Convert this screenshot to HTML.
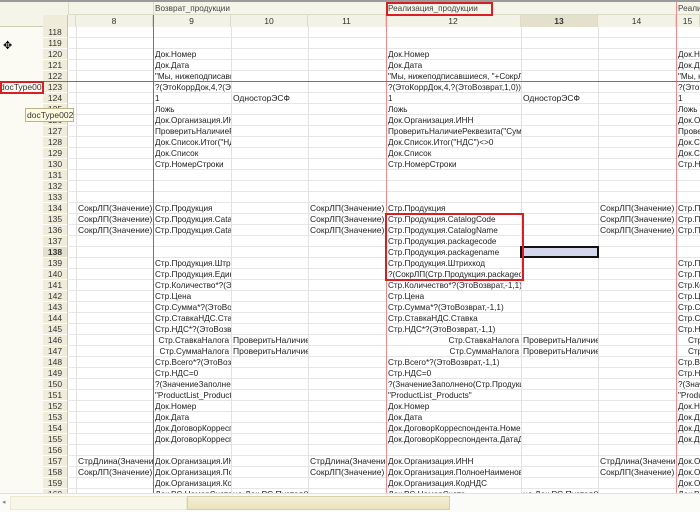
<!DOCTYPE html>
<html><head><meta charset="utf-8">
<style>
*{margin:0;padding:0;box-sizing:border-box}
body{width:700px;height:512px;overflow:hidden;background:#fff;position:relative;font-family:"Liberation Sans","DejaVu Sans",sans-serif;font-size:8.2px;color:#222}
.a{position:absolute}
.c{position:absolute;height:11px;line-height:11px;white-space:nowrap;overflow:hidden;font-size:8.2px;padding-left:2px}
.rn{position:absolute;left:43px;width:25px;height:11px;line-height:11px;text-align:center;font-size:8.5px;background:#efedda;border-bottom:1px solid #fff;border-right:1px solid #c9c6a8;color:#333}
.hd{position:absolute;top:15px;height:12px;line-height:12px;text-align:center;font-size:8.5px;background:#f3f2e6;border-right:1px solid #dcdac8;color:#333}
</style></head><body>
<div class="a" style="left:0;top:0;width:700px;height:2px;background:#9a9a9a"></div>
<div class="a" style="left:0;top:2px;width:700px;height:25px;background:#f5f4e9"></div>
<div class="a" style="left:68px;top:14px;width:632px;height:1px;background:#dcdac8"></div>
<div class="a" style="left:0;top:26px;width:700px;height:1px;background:#cfcdb6"></div>
<div class="a" style="left:0;top:27px;width:43px;height:466px;background:#fbfaf3"></div>
<div class="a" style="left:43px;top:15px;width:25px;height:12px;background:#efedda;border-right:1px solid #c9c6a8"></div>
<div class="a" style="left:68px;top:2px;width:1px;height:25px;background:#dcdac8"></div>
<div class="a" style="left:153px;top:2px;width:1px;height:13px;background:#dcdac8"></div>
<div class="c" style="left:153px;top:3px;width:150px;color:#444">Возврат_продукции</div>
<div class="c" style="left:386px;top:3px;width:150px;color:#444">Реализация_продукции</div>
<div class="c" style="left:676px;top:3px;width:30px;color:#444">Реали</div>
<div class="hd" style="left:68px;width:8px"></div>
<div class="hd" style="left:76px;width:77px">8</div>
<div class="hd" style="left:153px;width:78px">9</div>
<div class="hd" style="left:231px;width:77px">10</div>
<div class="hd" style="left:308px;width:78px">11</div>
<div class="hd" style="left:386px;width:135px">12</div>
<div class="hd" style="left:521px;width:77px;background:#e3e1cc;font-weight:bold">13</div>
<div class="hd" style="left:598px;width:78px">14</div>
<div class="hd" style="left:676px;width:24px">15</div>

<div class="a" style="left:68px;top:27px;width:632px;height:466px;background:
repeating-linear-gradient(to bottom,transparent 0,transparent 10px,#e6e6e6 10px,#e6e6e6 11px)"></div>
<div class="a" style="left:76px;top:27px;width:1px;height:466px;background:#e2e2e2"></div>
<div class="a" style="left:231px;top:27px;width:1px;height:466px;background:#e2e2e2"></div>
<div class="a" style="left:308px;top:27px;width:1px;height:466px;background:#e2e2e2"></div>
<div class="a" style="left:521px;top:27px;width:1px;height:466px;background:#e2e2e2"></div>
<div class="a" style="left:598px;top:27px;width:1px;height:466px;background:#e2e2e2"></div>

<div class="rn" style="top:27px">118</div><div class="rn" style="top:38px">119</div><div class="rn" style="top:49px">120</div><div class="rn" style="top:60px">121</div><div class="rn" style="top:71px">122</div><div class="rn" style="top:82px">123</div><div class="rn" style="top:93px">124</div><div class="rn" style="top:104px">125</div><div class="rn" style="top:115px">126</div><div class="rn" style="top:126px">127</div><div class="rn" style="top:137px">128</div><div class="rn" style="top:148px">129</div><div class="rn" style="top:159px">130</div><div class="rn" style="top:170px">131</div><div class="rn" style="top:181px">132</div><div class="rn" style="top:192px">133</div><div class="rn" style="top:203px">134</div><div class="rn" style="top:214px">135</div><div class="rn" style="top:225px">136</div><div class="rn" style="top:236px">137</div><div class="rn" style="top:247px;font-weight:bold;background:#e3e1cc">138</div><div class="rn" style="top:258px">139</div><div class="rn" style="top:269px">140</div><div class="rn" style="top:280px">141</div><div class="rn" style="top:291px">142</div><div class="rn" style="top:302px">143</div><div class="rn" style="top:313px">144</div><div class="rn" style="top:324px">145</div><div class="rn" style="top:335px">146</div><div class="rn" style="top:346px">147</div><div class="rn" style="top:357px">148</div><div class="rn" style="top:368px">149</div><div class="rn" style="top:379px">150</div><div class="rn" style="top:390px">151</div><div class="rn" style="top:401px">152</div><div class="rn" style="top:412px">153</div><div class="rn" style="top:423px">154</div><div class="rn" style="top:434px">155</div><div class="rn" style="top:445px">156</div><div class="rn" style="top:456px">157</div><div class="rn" style="top:467px">158</div><div class="rn" style="top:478px">159</div><div class="rn" style="top:489px">160</div>

<div class="c" style="left:153px;top:49px;width:78px">Док.Номер</div><div class="c" style="left:386px;top:49px;width:135px">Док.Номер</div><div class="c" style="left:676px;top:49px;width:24px">Док.Номер</div>
<div class="c" style="left:153px;top:60px;width:78px">Док.Дата</div><div class="c" style="left:386px;top:60px;width:135px">Док.Дата</div><div class="c" style="left:676px;top:60px;width:24px">Док.Дата</div>
<div class="c" style="left:153px;top:71px;width:78px">"Мы, нижеподписавшиеся</div><div class="c" style="left:386px;top:71px;width:135px">"Мы, нижеподписавшиеся, "+СокрЛП</div><div class="c" style="left:676px;top:71px;width:24px">"Мы, н</div>
<div class="c" style="left:153px;top:82px;width:78px">?(ЭтоКоррДок,4,?(ЭтоВозврат</div><div class="c" style="left:386px;top:82px;width:135px">?(ЭтоКоррДок,4,?(ЭтоВозврат,1,0))</div><div class="c" style="left:676px;top:82px;width:24px">?(ЭтоК</div>
<div class="c" style="left:153px;top:93px;width:78px">1</div><div class="c" style="left:231px;top:93px;width:77px;font-size:8.5px">ОдносторЭСФ</div><div class="c" style="left:386px;top:93px;width:135px">1</div><div class="c" style="left:521px;top:93px;width:77px;font-size:8.5px">ОдносторЭСФ</div><div class="c" style="left:676px;top:93px;width:24px">1</div>
<div class="c" style="left:153px;top:104px;width:78px">Ложь</div><div class="c" style="left:386px;top:104px;width:135px">Ложь</div><div class="c" style="left:676px;top:104px;width:24px">Ложь</div>
<div class="c" style="left:153px;top:115px;width:78px">Док.Организация.ИНН</div><div class="c" style="left:386px;top:115px;width:135px">Док.Организация.ИНН</div><div class="c" style="left:676px;top:115px;width:24px">Док.Орг</div>
<div class="c" style="left:153px;top:126px;width:78px">ПроверитьНаличиеРеквезита</div><div class="c" style="left:386px;top:126px;width:135px">ПроверитьНаличиеРеквезита("Сумма</div><div class="c" style="left:676px;top:126px;width:24px">Провер</div>
<div class="c" style="left:153px;top:137px;width:78px">Док.Список.Итог("НДС")</div><div class="c" style="left:386px;top:137px;width:135px">Док.Список.Итог("НДС")&lt;&gt;0</div><div class="c" style="left:676px;top:137px;width:24px">Док.Сп</div>
<div class="c" style="left:153px;top:148px;width:78px">Док.Список</div><div class="c" style="left:386px;top:148px;width:135px">Док.Список</div><div class="c" style="left:676px;top:148px;width:24px">Док.Сп</div>
<div class="c" style="left:153px;top:159px;width:78px">Стр.НомерСтроки</div><div class="c" style="left:386px;top:159px;width:135px">Стр.НомерСтроки</div><div class="c" style="left:676px;top:159px;width:24px">Стр.Но</div>

<div class="c" style="left:76px;top:203px;width:77px;font-size:8.5px">СокрЛП(Значение) =</div><div class="c" style="left:153px;top:203px;width:78px">Стр.Продукция</div><div class="c" style="left:308px;top:203px;width:78px;font-size:8.5px">СокрЛП(Значение) =</div><div class="c" style="left:386px;top:203px;width:135px">Стр.Продукция</div><div class="c" style="left:598px;top:203px;width:78px;font-size:8.5px">СокрЛП(Значение) =</div><div class="c" style="left:676px;top:203px;width:24px">Стр.Пр</div>
<div class="c" style="left:76px;top:214px;width:77px;font-size:8.5px">СокрЛП(Значение) =</div><div class="c" style="left:153px;top:214px;width:78px">Стр.Продукция.CatalogCode</div><div class="c" style="left:308px;top:214px;width:78px;font-size:8.5px">СокрЛП(Значение) =</div><div class="c" style="left:386px;top:214px;width:135px">Стр.Продукция.CatalogCode</div><div class="c" style="left:598px;top:214px;width:78px;font-size:8.5px">СокрЛП(Значение) =</div><div class="c" style="left:676px;top:214px;width:24px">Стр.Пр</div>
<div class="c" style="left:76px;top:225px;width:77px;font-size:8.5px">СокрЛП(Значение) =</div><div class="c" style="left:153px;top:225px;width:78px">Стр.Продукция.CatalogName</div><div class="c" style="left:308px;top:225px;width:78px;font-size:8.5px">СокрЛП(Значение) =</div><div class="c" style="left:386px;top:225px;width:135px">Стр.Продукция.CatalogName</div><div class="c" style="left:598px;top:225px;width:78px;font-size:8.5px">СокрЛП(Значение) =</div><div class="c" style="left:676px;top:225px;width:24px">Стр.Пр</div>
<div class="c" style="left:386px;top:236px;width:135px">Стр.Продукция.packagecode</div>
<div class="c" style="left:386px;top:247px;width:135px">Стр.Продукция.packagename</div>
<div class="c" style="left:153px;top:258px;width:78px">Стр.Продукция.Штрихкод</div><div class="c" style="left:386px;top:258px;width:135px">Стр.Продукция.Штрихкод</div><div class="c" style="left:676px;top:258px;width:24px">Стр.Пр</div>
<div class="c" style="left:153px;top:269px;width:78px">Стр.Продукция.Единицы</div><div class="c" style="left:386px;top:269px;width:135px">?(СокрЛП(Стр.Продукция.packagecode</div><div class="c" style="left:676px;top:269px;width:24px">Стр.Пр</div>
<div class="c" style="left:153px;top:280px;width:78px">Стр.Количество*?(ЭтоВозврат</div><div class="c" style="left:386px;top:280px;width:135px">Стр.Количество*?(ЭтоВозврат,-1,1)</div><div class="c" style="left:676px;top:280px;width:24px">Стр.Ко</div>
<div class="c" style="left:153px;top:291px;width:78px">Стр.Цена</div><div class="c" style="left:386px;top:291px;width:135px">Стр.Цена</div><div class="c" style="left:676px;top:291px;width:24px">Стр.Це</div>
<div class="c" style="left:153px;top:302px;width:78px">Стр.Сумма*?(ЭтоВозврат</div><div class="c" style="left:386px;top:302px;width:135px">Стр.Сумма*?(ЭтоВозврат,-1,1)</div><div class="c" style="left:676px;top:302px;width:24px">Стр.Су</div>
<div class="c" style="left:153px;top:313px;width:78px">Стр.СтавкаНДС.Ставка</div><div class="c" style="left:386px;top:313px;width:135px">Стр.СтавкаНДС.Ставка</div><div class="c" style="left:676px;top:313px;width:24px">Стр.Ст</div>
<div class="c" style="left:153px;top:324px;width:78px">Стр.НДС*?(ЭтоВозврат</div><div class="c" style="left:386px;top:324px;width:135px">Стр.НДС*?(ЭтоВозврат,-1,1)</div><div class="c" style="left:676px;top:324px;width:24px">Стр.НД</div>
<div class="c" style="left:153px;top:335px;width:78px;text-align:right;padding-right:2px">Стр.СтавкаНалога</div><div class="c" style="left:231px;top:335px;width:77px;font-size:8.5px">ПроверитьНаличиеР</div><div class="c" style="left:386px;top:335px;width:135px;text-align:right;padding-right:2px">Стр.СтавкаНалога</div><div class="c" style="left:521px;top:335px;width:77px;font-size:8.5px">ПроверитьНаличиеР</div><div class="c" style="left:676px;top:335px;width:24px;padding-left:12px">Стр</div>
<div class="c" style="left:153px;top:346px;width:78px;text-align:right;padding-right:2px">Стр.СуммаНалога</div><div class="c" style="left:231px;top:346px;width:77px;font-size:8.5px">ПроверитьНаличиеР</div><div class="c" style="left:386px;top:346px;width:135px;text-align:right;padding-right:2px">Стр.СуммаНалога</div><div class="c" style="left:521px;top:346px;width:77px;font-size:8.5px">ПроверитьНаличиеР</div><div class="c" style="left:676px;top:346px;width:24px;padding-left:12px">Стр</div>
<div class="c" style="left:153px;top:357px;width:78px">Стр.Всего*?(ЭтоВозврат</div><div class="c" style="left:386px;top:357px;width:135px">Стр.Всего*?(ЭтоВозврат,-1,1)</div><div class="c" style="left:676px;top:357px;width:24px">Стр.Вс</div>
<div class="c" style="left:153px;top:368px;width:78px">Стр.НДС=0</div><div class="c" style="left:386px;top:368px;width:135px">Стр.НДС=0</div><div class="c" style="left:676px;top:368px;width:24px">Стр.НД</div>
<div class="c" style="left:153px;top:379px;width:78px">?(ЗначениеЗаполнено(Стр</div><div class="c" style="left:386px;top:379px;width:135px">?(ЗначениеЗаполнено(Стр.Продукция</div><div class="c" style="left:676px;top:379px;width:24px">?(Знач</div>
<div class="c" style="left:153px;top:390px;width:78px">"ProductList_Products"</div><div class="c" style="left:386px;top:390px;width:135px">"ProductList_Products"</div><div class="c" style="left:676px;top:390px;width:24px">"Produ</div>
<div class="c" style="left:153px;top:401px;width:78px">Док.Номер</div><div class="c" style="left:386px;top:401px;width:135px">Док.Номер</div><div class="c" style="left:676px;top:401px;width:24px">Док.Но</div>
<div class="c" style="left:153px;top:412px;width:78px">Док.Дата</div><div class="c" style="left:386px;top:412px;width:135px">Док.Дата</div><div class="c" style="left:676px;top:412px;width:24px">Док.Да</div>
<div class="c" style="left:153px;top:423px;width:78px">Док.ДоговорКорреспондента</div><div class="c" style="left:386px;top:423px;width:135px">Док.ДоговорКорреспондента.НомерД</div><div class="c" style="left:676px;top:423px;width:24px">Док.Д</div>
<div class="c" style="left:153px;top:434px;width:78px">Док.ДоговорКорреспондента</div><div class="c" style="left:386px;top:434px;width:135px">Док.ДоговорКорреспондента.ДатаДо</div><div class="c" style="left:676px;top:434px;width:24px">Док.Д</div>
<div class="c" style="left:76px;top:456px;width:77px;font-size:8.5px">СтрДлина(Значение</div><div class="c" style="left:153px;top:456px;width:78px">Док.Организация.ИНН</div><div class="c" style="left:308px;top:456px;width:78px;font-size:8.5px">СтрДлина(Значение</div><div class="c" style="left:386px;top:456px;width:135px">Док.Организация.ИНН</div><div class="c" style="left:598px;top:456px;width:78px;font-size:8.5px">СтрДлина(Значение</div><div class="c" style="left:676px;top:456px;width:24px">Док.Ор</div>
<div class="c" style="left:76px;top:467px;width:77px;font-size:8.5px">СокрЛП(Значение) =</div><div class="c" style="left:153px;top:467px;width:78px">Док.Организация.ПолноеНаим</div><div class="c" style="left:308px;top:467px;width:78px;font-size:8.5px">СокрЛП(Значение) =</div><div class="c" style="left:386px;top:467px;width:135px">Док.Организация.ПолноеНаименова</div><div class="c" style="left:598px;top:467px;width:78px;font-size:8.5px">СокрЛП(Значение) =</div><div class="c" style="left:676px;top:467px;width:24px">Док.Ор</div>
<div class="c" style="left:153px;top:478px;width:78px">Док.Организация.КодНДС</div><div class="c" style="left:386px;top:478px;width:135px">Док.Организация.КодНДС</div><div class="c" style="left:676px;top:478px;width:24px">Док.Ор</div>
<div class="c" style="left:153px;top:489px;width:78px">Док.РС.НомерСчета</div><div class="c" style="left:231px;top:489px;width:77px;font-size:8.5px">не Док.РС.Пустая()</div><div class="c" style="left:386px;top:489px;width:135px">Док.РС.НомерСчета</div><div class="c" style="left:521px;top:489px;width:77px;font-size:8.5px">не Док.РС.Пустая()</div><div class="c" style="left:676px;top:489px;width:24px">Док.Р</div>

<div class="a" style="left:153px;top:15px;width:1px;height:478px;background:#e0474c"></div>
<div class="a" style="left:386px;top:2px;width:1px;height:491px;background:#ef8a8d"></div>
<div class="a" style="left:676px;top:2px;width:1px;height:491px;background:#ef8a8d"></div>
<div class="a" style="left:0;top:81px;width:700px;height:1px;background:#e0474c"></div>

<div class="a" style="left:520px;top:246px;width:79px;height:12px;background:#d4d6ec;border:2px solid #111"></div>
<div class="a" style="left:385px;top:213px;width:139px;height:68px;border:2px solid #d81f26"></div>
<div class="a" style="left:386px;top:2px;width:107px;height:14px;border:2px solid #d81f26"></div>
<div class="a" style="left:0;top:82px;width:42px;height:11px;background:#fbfaf3;overflow:hidden;font-size:8.5px;line-height:11px;color:#333;white-space:nowrap">docType002</div>
<div class="a" style="left:0;top:81px;width:44px;height:13px;border:2px solid #d81f26"></div>
<div class="a" style="left:25px;top:108px;width:49px;height:14px;background:#fffbe0;border:1px solid #b9b48a;font-size:8.5px;line-height:12px;padding-left:1px;color:#333;white-space:nowrap;overflow:hidden">docType002</div>
<div class="a" style="left:3px;top:41px;font-size:11px;line-height:11px;color:#000">✥</div>

<div class="a" style="left:0;top:493px;width:700px;height:19px;background:#fbfbf8;border-top:1px solid #e2e2da"></div>
<div class="a" style="left:2px;top:498px;font-size:7px;color:#888">◂</div>
<div class="a" style="left:10px;top:496px;width:177px;height:14px;background:#f8f6e8;border:1px solid #ebe8d4"></div>
<div class="a" style="left:187px;top:496px;width:263px;height:14px;background:linear-gradient(#f5f0d6,#e9e2bd);border:1px solid #d6cfa8"></div>
</body></html>
